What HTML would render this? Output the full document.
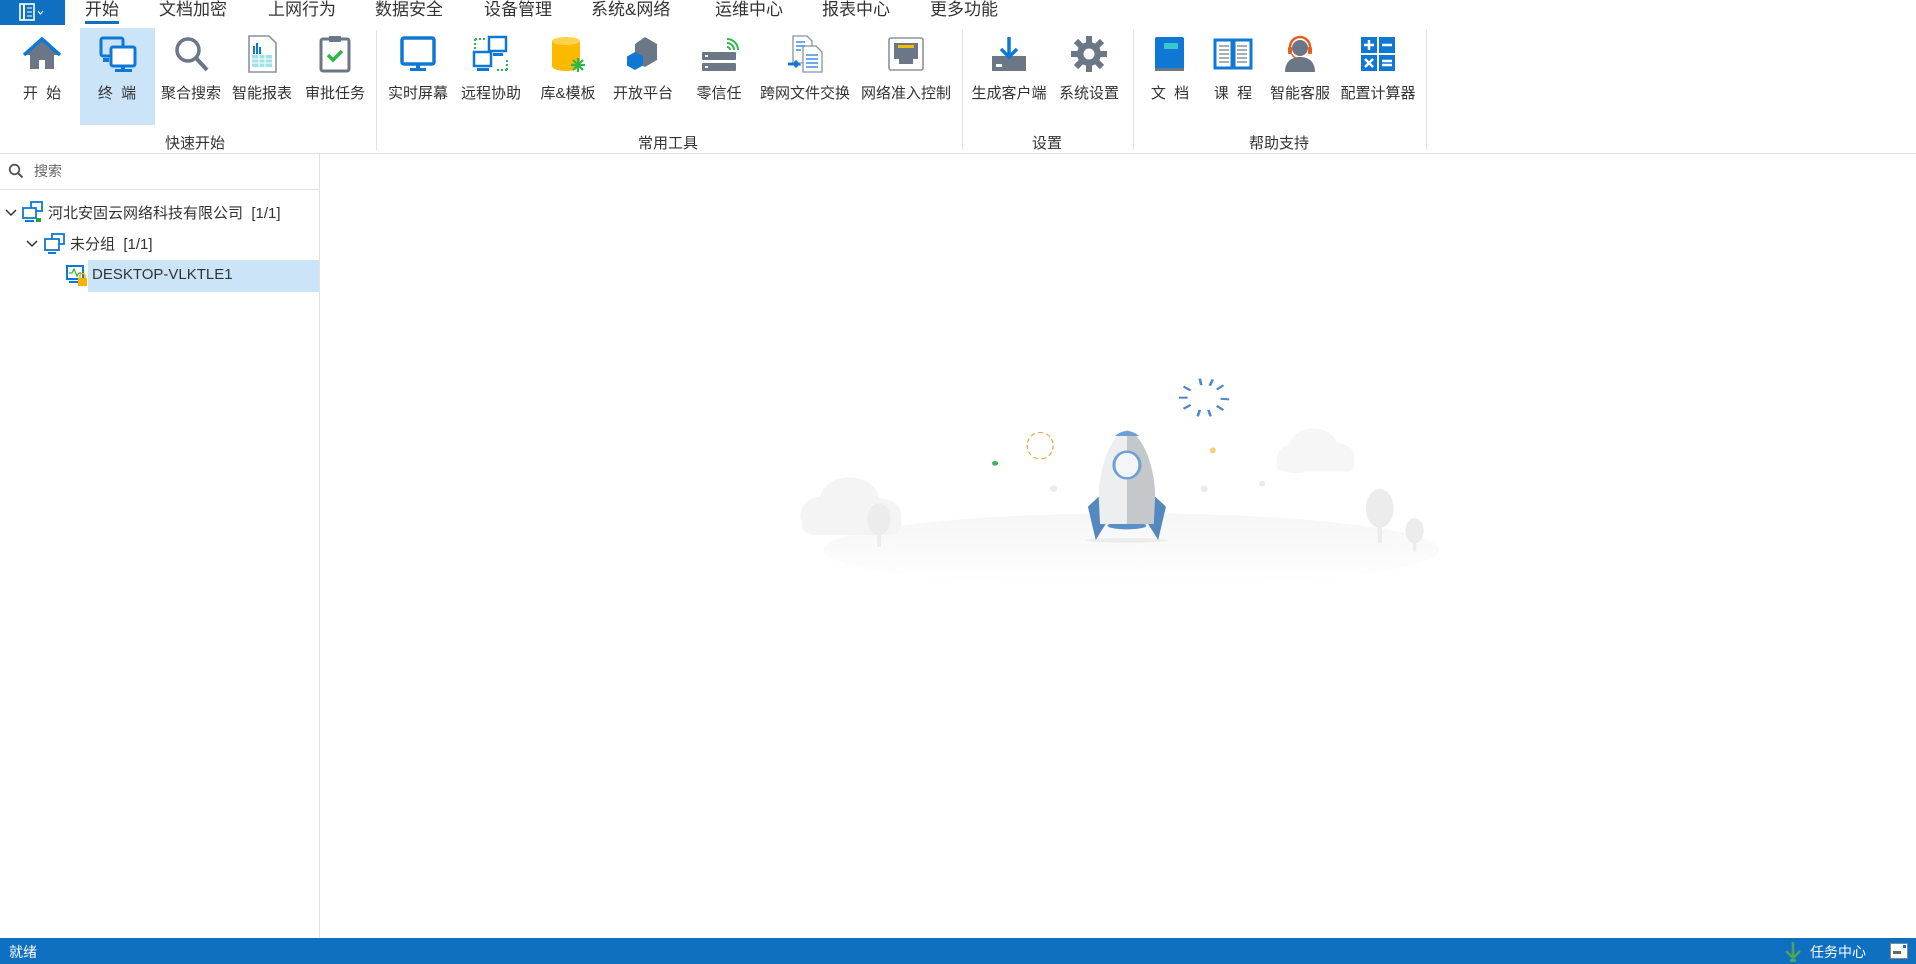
<!DOCTYPE html>
<html><head><meta charset="utf-8">
<style>
*{margin:0;padding:0;box-sizing:border-box}
body{width:1916px;height:964px;background:#fff;position:relative;overflow:hidden;font-family:"Liberation Sans","Noto Sans CJK SC",sans-serif;color:#333}
.abs{position:absolute}
.tab{position:absolute;top:0;height:25px;line-height:20px;font-size:17px;color:#333;white-space:nowrap}
.item{position:absolute;top:28px;height:97px;width:74px;margin-left:-37px;text-align:center}
.item svg{position:absolute;left:17px;top:6px;width:40px;height:40px}
.item .lb{position:absolute;left:-20px;right:-20px;top:54px;font-size:15px;color:#333;white-space:nowrap;text-align:center}
.sep{position:absolute;top:30px;height:120px;width:1px;background:#e3e3e3}
.grp{position:absolute;top:132px;font-size:15px;color:#333;transform:translateX(-50%);white-space:nowrap}
.tree{position:absolute;font-size:15px;color:#333;white-space:nowrap}
</style></head><body>
<div class="abs" style="left:0;top:0;width:65px;height:25px;background:#0f6fc0"></div>
<svg class="abs" style="left:18px;top:3px" width="30" height="19" viewBox="0 0 30 19"><rect x="2" y="1" width="14" height="16" fill="none" stroke="#fff" stroke-width="1.6"/><rect x="5" y="1" width="2" height="16" fill="#fff"/><line x1="9" y1="5" x2="14" y2="5" stroke="#fff"/><line x1="9" y1="9" x2="14" y2="9" stroke="#fff"/><line x1="9" y1="13" x2="14" y2="13" stroke="#fff"/><path d="M20 8l2.5 3 2.5-3" fill="none" stroke="#fff" stroke-width="1.2"/></svg>
<div class="tab" style="left:85px">开始</div>
<div class="abs" style="left:85px;top:21px;width:34px;height:3px;background:#0f6fc0"></div>
<div class="tab" style="left:159px">文档加密</div>
<div class="tab" style="left:268px">上网行为</div>
<div class="tab" style="left:375px">数据安全</div>
<div class="tab" style="left:484px">设备管理</div>
<div class="tab" style="left:591px">系统&amp;网络</div>
<div class="tab" style="left:715px">运维中心</div>
<div class="tab" style="left:822px">报表中心</div>
<div class="tab" style="left:930px">更多功能</div>

<div class="abs" style="left:80px;top:28px;width:75px;height:97px;background:#cce4f7"></div>
<div class="item" style="left:42px"><svg viewBox="0 0 40 40"><path d="M20 5L3 21h5v14h9V26h6v9h9V21h5z" fill="#6b7687"/><path d="M2 21L20 5l18 16" fill="none" stroke="#0f78d4" stroke-width="3.5"/></svg><div class="lb">开&nbsp;&nbsp;始</div></div>
<div class="item" style="left:117px"><svg viewBox="0 0 40 40"><rect x="4" y="4" width="22" height="18" rx="2" fill="none" stroke="#0f78d4" stroke-width="3"/><rect x="14" y="13" width="24" height="19" rx="2" fill="#fff" stroke="#0f78d4" stroke-width="3"/><rect x="24" y="32" width="4" height="3" fill="#0f78d4"/><rect x="18" y="35" width="17" height="3" fill="#0f78d4"/><rect x="6" y="24" width="6" height="4" fill="#0f78d4"/></svg><div class="lb">终&nbsp;&nbsp;端</div></div>
<div class="item" style="left:191px"><svg viewBox="0 0 40 40"><circle cx="17" cy="16" r="11" fill="none" stroke="#6b7687" stroke-width="3.5"/><line x1="25" y1="24" x2="36" y2="36" stroke="#6b7687" stroke-width="4"/></svg><div class="lb">聚合搜索</div></div>
<div class="item" style="left:262px"><svg viewBox="0 0 40 40"><path d="M7 2h20l7 7v29H7z" fill="#fff" stroke="#8a93a0" stroke-width="1.6"/><rect x="11" y="12" width="2" height="8" fill="#0f78d4"/><rect x="14" y="9" width="2" height="11" fill="#0f78d4"/><rect x="17" y="13" width="2" height="7" fill="#0f78d4"/><rect x="10" y="21" width="20" height="12" fill="#5fd0d8" opacity=".6"/><path d="M10 25h20M10 29h20M17 21v12M23 21v12" stroke="#fff"/></svg><div class="lb">智能报表</div></div>
<div class="item" style="left:335px"><svg viewBox="0 0 40 40"><rect x="6" y="5" width="28" height="32" rx="2" fill="none" stroke="#6b7687" stroke-width="3"/><rect x="14" y="2" width="12" height="6" rx="1" fill="#6b7687"/><path d="M13 21l5 5 9-9" fill="none" stroke="#2eb84a" stroke-width="3.5"/></svg><div class="lb">审批任务</div></div>
<div class="sep" style="left:376px"></div>
<div class="item" style="left:418px"><svg viewBox="0 0 40 40"><rect x="4" y="4" width="32" height="26" rx="2" fill="none" stroke="#0f78d4" stroke-width="3.5"/><rect x="18" y="30" width="4" height="4" fill="#0f78d4"/><rect x="12" y="34" width="16" height="3" fill="#0f78d4"/></svg><div class="lb">实时屏幕</div></div>
<div class="item" style="left:491px"><svg viewBox="0 0 40 40"><path d="M4 5h10M4 5v10M26 36h10M36 36V24" stroke="#2eb84a" stroke-width="2" stroke-dasharray="2 2" fill="none"/><rect x="18" y="3" width="17" height="14" fill="#fff" stroke="#0f78d4" stroke-width="2.5"/><rect x="3" y="18" width="17" height="14" fill="#fff" stroke="#0f78d4" stroke-width="2.5"/><rect x="22" y="19" width="10" height="3" fill="#0f78d4"/><rect x="6" y="34" width="12" height="3" fill="#0f78d4"/></svg><div class="lb">远程协助</div></div>
<div class="item" style="left:568px"><svg viewBox="0 0 40 40"><path d="M4 7v25c0 3 7 5 14 5s14-2 14-5V7z" fill="#fbb900"/><ellipse cx="18" cy="7" rx="14" ry="4" fill="#ffd24d"/><path d="M30 24v14M23 31h14M25 26l10 10M35 26l-10 10" stroke="#2eb84a" stroke-width="2.2"/></svg><div class="lb">库&amp;模板</div></div>
<div class="item" style="left:643px"><svg viewBox="0 0 40 40"><path d="M22 3l12 7v16l-12 7-10-6V10z" fill="#6b7687"/><path d="M12 18l8 4.5v9L12 36l-8-4.5v-9z" fill="#0f78d4"/></svg><div class="lb">开放平台</div></div>
<div class="item" style="left:719px"><svg viewBox="0 0 40 40"><rect x="3" y="18" width="34" height="8" rx="1" fill="#6b7687"/><rect x="3" y="29" width="34" height="8" rx="1" fill="#6b7687"/><rect x="6" y="21" width="3" height="2" fill="#fff"/><rect x="6" y="32" width="3" height="2" fill="#fff"/><path d="M28 13a3 3 0 013 3M28 9a7 7 0 017 7M28 5a11 11 0 0111 11" fill="none" stroke="#2eb84a" stroke-width="2"/></svg><div class="lb">零信任</div></div>
<div class="item" style="left:805px"><svg viewBox="0 0 40 40"><path d="M8 2h14l5 5v22H8z" fill="#fff" stroke="#8a93a0" stroke-width="1.3"/><path d="M18 12h13l6 6v20H18z" fill="#fff" stroke="#8a93a0" stroke-width="1.3"/><path d="M11 8h9M11 12h9M11 16h5M21 21h12M21 25h12M21 29h12M21 33h12" stroke="#3c8fe0" stroke-width="1.4"/><path d="M3 30h10l-3-3M13 30l-3 3" stroke="#0f78d4" stroke-width="3" fill="none"/></svg><div class="lb">跨网文件交换</div></div>
<div class="item" style="left:906px"><svg viewBox="0 0 40 40"><rect x="3" y="4" width="34" height="32" rx="2" fill="#fff" stroke="#8a93a0" stroke-width="1.6"/><path d="M8 9h24v16h-5v5H13v-5H8z" fill="#6b7687"/><rect x="12" y="11" width="16" height="3" fill="#fbb900"/></svg><div class="lb">网络准入控制</div></div>
<div class="sep" style="left:962px"></div>
<div class="item" style="left:1009px"><svg viewBox="0 0 40 40"><rect x="3" y="22" width="34" height="15" fill="#6b7687"/><rect x="7" y="30" width="6" height="3" fill="#fff"/><path d="M20 3v20M12 15l8 8 8-8" fill="none" stroke="#0f78d4" stroke-width="3.5"/></svg><div class="lb">生成客户端</div></div>
<div class="item" style="left:1089px"><svg viewBox="0 0 40 40"><circle cx="20" cy="20" r="12" fill="#6b7687"/><g stroke="#6b7687" stroke-width="6"><path d="M20 2v36M2 20h36M7 7l26 26M33 7L7 33"/></g><circle cx="20" cy="20" r="5.5" fill="#fff"/></svg><div class="lb">系统设置</div></div>
<div class="sep" style="left:1133px"></div>
<div class="item" style="left:1170px"><svg viewBox="0 0 40 40"><rect x="5" y="3" width="29" height="34" rx="2" fill="#0f78d4"/><rect x="5" y="34" width="29" height="3" fill="#6b7687"/><rect x="14" y="9" width="14" height="6" fill="#36c6cf"/></svg><div class="lb">文&nbsp;&nbsp;档</div></div>
<div class="item" style="left:1233px"><svg viewBox="0 0 40 40"><path d="M2 6h17v28H2zM21 6h17v28H21z" fill="#fff" stroke="#0f78d4" stroke-width="3"/><path d="M6 12h10M6 16h10M6 20h10M6 24h10M6 28h10M24 12h10M24 16h10M24 20h10M24 24h10M24 28h10" stroke="#8a93a0" stroke-width="1.5"/></svg><div class="lb">课&nbsp;&nbsp;程</div></div>
<div class="item" style="left:1300px"><svg viewBox="0 0 40 40"><circle cx="20" cy="14" r="8" fill="#6b7687"/><path d="M5 38c0-10 6-15 15-15s15 5 15 15z" fill="#6b7687"/><path d="M10 17v-4a10 10 0 0120 0v4" fill="none" stroke="#e85c1f" stroke-width="2.5"/><rect x="8" y="13" width="4" height="7" rx="1" fill="#e85c1f"/><rect x="28" y="13" width="4" height="7" rx="1" fill="#e85c1f"/><path d="M12 20q1 4 6 4" fill="none" stroke="#e85c1f" stroke-width="1.5"/></svg><div class="lb">智能客服</div></div>
<div class="item" style="left:1378px"><svg viewBox="0 0 40 40"><rect x="3" y="3" width="16" height="16" fill="#0f78d4"/><rect x="21" y="3" width="16" height="16" fill="#0f78d4"/><rect x="3" y="21" width="16" height="16" fill="#0f78d4"/><rect x="21" y="21" width="16" height="16" fill="#0f78d4"/><path d="M6 11h10M11 6v10M24 11h10M7 25l8 8M15 25l-8 8M24 27h10M24 31h10" stroke="#fff" stroke-width="2.5"/></svg><div class="lb">配置计算器</div></div>
<div class="sep" style="left:1426px"></div>
<div class="grp" style="left:195px">快速开始</div>
<div class="grp" style="left:668px">常用工具</div>
<div class="grp" style="left:1047px">设置</div>
<div class="grp" style="left:1279px">帮助支持</div>
<div class="abs" style="left:0;top:153px;width:1916px;height:1px;background:#e2e2e2"></div>

<div class="abs" style="left:319px;top:154px;width:1px;height:784px;background:#e2e2e2"></div>
<svg class="abs" style="left:8px;top:163px" width="16" height="16" viewBox="0 0 16 16"><circle cx="6.5" cy="6.5" r="4.8" fill="none" stroke="#555" stroke-width="1.8"/><line x1="10" y1="10" x2="14.5" y2="14.5" stroke="#555" stroke-width="2"/></svg>
<div class="tree" style="left:34px;top:161px;color:#666;font-size:14px">搜索</div>
<div class="abs" style="left:0;top:189px;width:319px;height:1px;background:#e2e2e2"></div>
<svg class="abs" style="left:5px;top:208px" width="12" height="10" viewBox="0 0 12 10"><path d="M1 2l5 5 5-5" fill="none" stroke="#333" stroke-width="1.5"/></svg>
<svg class="abs" style="left:22px;top:201px" width="22" height="22" viewBox="0 0 22 22"><rect x="9" y="1" width="11" height="9" fill="#fff" stroke="#0f78d4" stroke-width="1.8"/><rect x="1" y="7" width="13" height="10" fill="#fff" stroke="#0f78d4" stroke-width="1.8"/><rect x="3" y="19" width="9" height="2" fill="#0f78d4"/><rect x="14" y="17" width="5" height="4" fill="#2e9b4a"/></svg>
<div class="tree" style="left:48px;top:202px">河北安固云网络科技有限公司&nbsp;&nbsp;[1/1]</div>
<svg class="abs" style="left:26px;top:239px" width="12" height="10" viewBox="0 0 12 10"><path d="M1 2l5 5 5-5" fill="none" stroke="#333" stroke-width="1.5"/></svg>
<svg class="abs" style="left:44px;top:233px" width="22" height="22" viewBox="0 0 22 22"><rect x="8" y="1" width="12" height="10" fill="#fff" stroke="#0f78d4" stroke-width="1.8"/><rect x="1" y="6" width="14" height="11" fill="#fff" stroke="#0f78d4" stroke-width="1.8"/><rect x="4" y="19" width="8" height="2" fill="#0f78d4"/></svg>
<div class="tree" style="left:70px;top:233px">未分组&nbsp;&nbsp;[1/1]</div>
<div class="abs" style="left:88px;top:260px;width:231px;height:32px;background:#cce4f7"></div>
<svg class="abs" style="left:66px;top:264px" width="22" height="24" viewBox="0 0 22 24"><rect x="1" y="2" width="16" height="13" fill="#fff" stroke="#0f78d4" stroke-width="2"/><path d="M3 9h3l2-4 3 7 2-3h2" fill="none" stroke="#2eb84a" stroke-width="1.3"/><rect x="3" y="17" width="10" height="2" fill="#0f78d4"/><rect x="12" y="14" width="9" height="8" fill="#f5b400"/><path d="M14 14v-2a2.5 2.5 0 015 0v2" fill="none" stroke="#f5b400" stroke-width="1.5"/></svg>
<div class="tree" style="left:92px;top:266px">DESKTOP-VLKTLE1</div>

<svg class="abs" style="left:780px;top:360px" width="680" height="230" viewBox="0 0 1568 690" preserveAspectRatio="none">
<defs><linearGradient id="g" x1="0" y1="0" x2="0" y2="1"><stop offset="0" stop-color="#f6f6f6"/><stop offset="1" stop-color="#fff"/></linearGradient></defs>
<ellipse cx="810" cy="570" rx="710" ry="110" fill="url(#g)"/>
<g fill="#f4f4f4"><circle cx="160" cy="420" r="68"/><circle cx="105" cy="465" r="58"/><circle cx="230" cy="465" r="50"/><rect x="50" y="460" width="230" height="65" rx="30"/></g>
<ellipse cx="228" cy="478" rx="27" ry="48" fill="#ececec"/><rect x="224" y="515" width="9" height="45" fill="#ececec"/>
<g fill="#f6f6f6"><circle cx="1230" cy="260" r="55"/><circle cx="1190" cy="295" r="45"/><circle cx="1285" cy="290" r="40"/><rect x="1145" y="290" width="180" height="45" rx="20"/></g>
<ellipse cx="1383" cy="445" rx="32" ry="58" fill="#ececec"/><rect x="1378" y="490" width="10" height="58" fill="#ececec"/>
<ellipse cx="1463" cy="512" rx="21" ry="38" fill="#ececec"/><rect x="1460" y="540" width="7" height="35" fill="#ececec"/>
<ellipse cx="800" cy="541" rx="95" ry="7" fill="#ececec"/>
<path d="M735 410L710 440L728 540L752 490Z" fill="#5488bf"/>
<path d="M865 410L890 440L872 540L848 490Z" fill="#5488bf"/>
<ellipse cx="800" cy="497" rx="45" ry="11" fill="#5a8fc8"/>
<path d="M800 210C760 225 735 330 735 410L738 492H800Z" fill="#eceef0"/>
<path d="M800 210C840 225 865 330 865 410L862 492H800Z" fill="#c4c8cb"/>
<path d="M772 228Q800 198 828 228Z" fill="#6a9fd8"/>
<ellipse cx="800" cy="315" rx="30" ry="40" fill="#f4f5f6" stroke="#6fa0d8" stroke-width="7"/>
<ellipse cx="600" cy="257" rx="30" ry="40" fill="none" stroke="#f4a640" stroke-width="3" stroke-dasharray="12 8"/>
<circle cx="496" cy="310" r="7" fill="#3cb55b"/>
<ellipse cx="998" cy="271" rx="7" ry="9" fill="#f5d27a"/>
<g fill="#ebebeb"><ellipse cx="631" cy="386" rx="8" ry="10"/><ellipse cx="978" cy="387" rx="8" ry="10"/><ellipse cx="1112" cy="371" rx="7" ry="9"/></g>
<g stroke="#4a86c8" stroke-width="6" transform="translate(978 113)">
<line x1="0" y1="-38" x2="0" y2="-58" transform="rotate(-10)"/><line x1="0" y1="-38" x2="0" y2="-58" transform="rotate(20)"/><line x1="0" y1="-38" x2="0" y2="-58" transform="rotate(50)"/><line x1="0" y1="-38" x2="0" y2="-58" transform="rotate(95)"/><line x1="0" y1="-38" x2="0" y2="-58" transform="rotate(130)"/><line x1="0" y1="-38" x2="0" y2="-58" transform="rotate(165)"/><line x1="0" y1="-38" x2="0" y2="-58" transform="rotate(195)"/><line x1="0" y1="-38" x2="0" y2="-58" transform="rotate(235)"/><line x1="0" y1="-38" x2="0" y2="-58" transform="rotate(270)"/><line x1="0" y1="-38" x2="0" y2="-58" transform="rotate(305)"/>
</g>
</svg>

<div class="abs" style="left:0;top:938px;width:1916px;height:26px;background:#0f6fc0"></div>
<div class="abs" style="left:9px;top:942px;font-size:14px;color:#fff">就绪</div>
<svg class="abs" style="left:1784px;top:940px" width="18" height="22" viewBox="0 0 18 22"><path d="M9 2v16M2 11l7 7 7-7" fill="none" stroke="#4ca35a" stroke-width="2.5"/><rect x="6" y="19" width="6" height="3" fill="#4ca35a"/></svg>
<div class="abs" style="left:1810px;top:942px;font-size:14px;color:#fff">任务中心</div>
<svg class="abs" style="left:1890px;top:943px" width="18" height="16" viewBox="0 0 18 16"><rect x="0.5" y="0.5" width="17" height="15" fill="#fff" stroke="#888"/><rect x="3" y="8" width="8" height="3" fill="#666"/><rect x="13" y="2" width="3" height="3" fill="#0f6fc0"/></svg>
</body></html>
